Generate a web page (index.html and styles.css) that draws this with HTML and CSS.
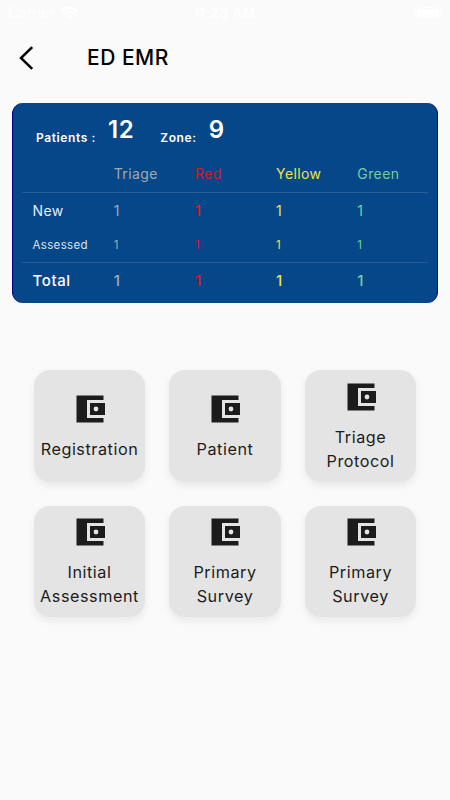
FILE: index.html
```html
<!DOCTYPE html>
<html lang="en">
<head>
    <meta charset="UTF-8">
    <meta name="viewport" content="width=device-width, initial-scale=1.0">
    <title>ED EMR</title>
    <link rel="stylesheet" href="styles.css">
</head>
<body>
    <!-- Wallet icon shared by the menu tiles -->
    <svg class="sprite" width="0" height="0">
        <symbol id="wallet" viewBox="0 0 24 24">
            <path fill-rule="evenodd" d="M10 18V6h11V3H3v18h18v-3H10zM12 8v8h10V8H12zm4 5.6a1.6 1.6 0 1 1 0-3.2 1.6 1.6 0 0 1 0 3.2z"/>
        </symbol>
    </svg>

    <div class="status-bar">
        <div class="carrier">
            <span>Carrier</span>
            <svg width="17" height="12" viewBox="0 0 17 12" fill="none" stroke="#fff" stroke-width="2.4">
                <path d="M1 4.2a10.6 10.6 0 0 1 15 0M3.7 7a6.8 6.8 0 0 1 9.6 0"/>
                <path d="M8.5 12L6 9.4a3.6 3.6 0 0 1 5 0z" fill="#fff" stroke="none"/>
            </svg>
        </div>
        <div class="time">11:23 AM</div>
        <div class="battery"><span></span></div>
    </div>

    <header class="app-bar">
        <svg class="back" width="15" height="24" viewBox="0 0 15 24">
            <path d="M13.2 1.2L2 12l11.2 10.8" fill="none" stroke="#000" stroke-width="2.5"/>
        </svg>
        <h1>ED EMR</h1>
    </header>

    <section class="summary">
        <div class="counts">
            <span class="label">Patients :</span>
            <span class="value patients">12</span>
            <span class="label">Zone:</span>
            <span class="value">9</span>
        </div>
        <div class="table">
            <div class="row head">
                <span></span>
                <span class="triage">Triage</span>
                <span class="red">Red</span>
                <span class="yellow">Yellow</span>
                <span class="green">Green</span>
            </div>
            <div class="row new">
                <span>New</span>
                <span class="triage">1</span>
                <span class="red">1</span>
                <span class="yellow">1</span>
                <span class="green">1</span>
            </div>
            <div class="row assessed">
                <span>Assessed</span>
                <span class="triage">1</span>
                <span class="red">1</span>
                <span class="yellow">1</span>
                <span class="green">1</span>
            </div>
            <div class="row total">
                <span>Total</span>
                <span class="triage">1</span>
                <span class="red">1</span>
                <span class="yellow">1</span>
                <span class="green">1</span>
            </div>
        </div>
    </section>

    <main class="menu">
        <div class="tile">
            <svg><use href="#wallet"/></svg>
            <p>Registration</p>
        </div>
        <div class="tile">
            <svg><use href="#wallet"/></svg>
            <p>Patient</p>
        </div>
        <div class="tile">
            <svg><use href="#wallet"/></svg>
            <p>Triage<br>Protocol</p>
        </div>
        <div class="tile">
            <svg><use href="#wallet"/></svg>
            <p>Initial<br>Assessment</p>
        </div>
        <div class="tile">
            <svg><use href="#wallet"/></svg>
            <p>Primary<br>Survey</p>
        </div>
        <div class="tile">
            <svg><use href="#wallet"/></svg>
            <p>Primary<br>Survey</p>
        </div>
    </main>
</body>
</html>
```
FILE: styles.css
```css
* {
    margin: 0;
    padding: 0;
    box-sizing: border-box;
}
body {
    font-family: Inter, sans-serif;
    background: #fafafa;
    color: #1c1c1c;
    min-height: 100vh;
}
.sprite {
    display: block;
}

/* Status bar */
.status-bar {
    display: grid;
    grid-template-columns: 1fr auto 1fr;
    align-items: center;
    height: 25px;
    padding: 0 9px 0 8px;
    color: #fff;
    font-size: 14px;
}
.carrier {
    display: flex;
    align-items: center;
    gap: 6px;
    letter-spacing: 0.1px;
}
.time {
    font-weight: 600;
    letter-spacing: 0.2px;
}
.battery {
    justify-self: end;
    width: 26px;
    height: 12px;
    padding: 1px;
    border: 1px solid #fdfdfd;
    border-radius: 3px;
}
.battery span {
    display: block;
    height: 100%;
    background: #fff;
    border-radius: 2px;
}

/* App bar */
.app-bar {
    display: flex;
    align-items: center;
    height: 65px;
    padding-left: 19px;
}
.app-bar h1 {
    margin-left: 53px;
    color: #000;
    font-size: 21px;
    font-weight: 500;
    letter-spacing: 0.5px;
}

/* Patient summary */
.summary {
    height: 200px;
    margin: 13px 12px 0;
    padding: 0 9px;
    background: #064789;
    border-left: 1px solid #00007d;
    border-right: 1px solid #00007d;
    border-radius: 11px;
    color: #fff;
}
.counts {
    display: flex;
    align-items: baseline;
    height: 54px;
    padding: 16px 0 0 14px;
}
.counts .label {
    font-size: 12px;
    font-weight: 600;
    letter-spacing: 0.6px;
}
.counts .value {
    position: relative;
    top: -4px;
    margin-left: 12px;
    font-size: 24px;
    font-weight: 600;
    letter-spacing: 0.6px;
}
.counts .patients {
    margin-right: 26px;
}
.row {
    display: grid;
    grid-template-columns: repeat(5, 1fr);
    align-items: center;
    height: 35px;
    font-size: 14px;
    letter-spacing: 0.4px;
}
.row span {
    padding-left: 10.5px;
}
.head {
    height: 36px;
    padding-bottom: 2px;
    border-bottom: 1px solid #265e96;
}
.new {
    height: 34px;
    color: #e6edf3;
}
.assessed {
    color: #dae3ec;
    font-size: 11.5px;
    letter-spacing: 0.35px;
}
.total {
    height: 36px;
    border-top: 1px solid #265e96;
    font-size: 15px;
    font-weight: 500;
    letter-spacing: 0.6px;
}
.triage {
    color: #a3a9b2;
}
.red {
    color: #d0182f;
}
.new .red,
.total .red {
    color: #ea1220;
}
.new .red {
    font-weight: 500;
}
.yellow {
    color: #e9e34a;
}
.green {
    color: #70cfa0;
}

/* Menu tiles */
.menu {
    display: grid;
    grid-template-columns: repeat(3, 111.5px);
    gap: 24px;
    justify-content: center;
    margin-top: 67px;
}
.tile {
    display: flex;
    flex-direction: column;
    align-items: center;
    justify-content: center;
    height: 111.5px;
    background: #e4e4e4;
    border-radius: 16px;
    box-shadow: 0 4px 8px rgba(0, 0, 0, 0.07);
}
.tile svg {
    width: 36px;
    height: 36px;
    margin-bottom: 10px;
    fill: #1c1c1c;
}
.tile p {
    font-size: 16.2px;
    line-height: 24px;
    letter-spacing: 0.55px;
    text-align: center;
    white-space: nowrap;
}
```
